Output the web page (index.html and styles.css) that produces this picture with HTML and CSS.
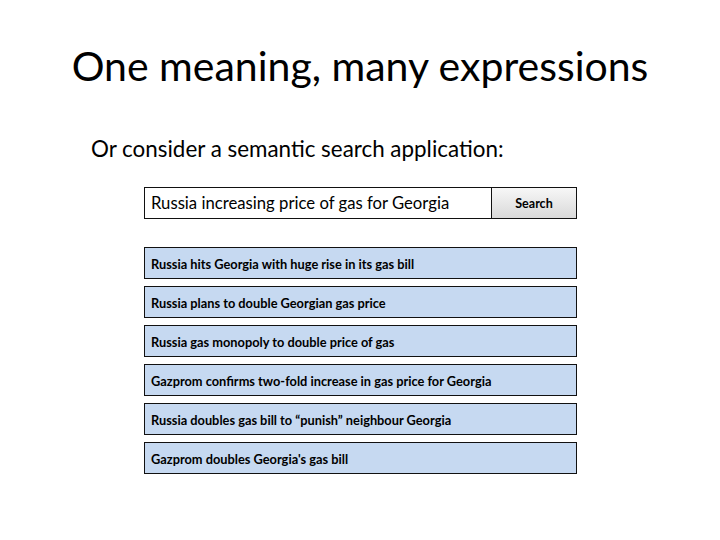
FILE: index.html
```html
<!DOCTYPE html>
<html>
<head>
<meta charset="utf-8">
<link rel="stylesheet" href="styles.css">
</head>
<body>
<div class="slide">
  <h1 class="title">One meaning, many expressions</h1>
  <p class="subtitle">Or consider a semantic search application:</p>
  <div class="search">
    <div class="query">Russia increasing price of gas for Georgia</div>
    <div class="btn">Search</div>
  </div>
  <div class="results">
    <div class="result">Russia hits Georgia with huge rise in its gas bill</div>
    <div class="result">Russia plans to double Georgian gas price</div>
    <div class="result">Russia gas monopoly to double price of gas</div>
    <div class="result">Gazprom confirms two-fold increase in gas price for Georgia</div>
    <div class="result">Russia doubles gas bill to “punish” neighbour Georgia</div>
    <div class="result">Gazprom doubles Georgia's gas bill</div>
  </div>
</div>
</body>
</html>
```
FILE: styles.css
```css
html, body {
  margin: 0;
  padding: 0;
  background: #ffffff;
}
.slide {
  width: 720px;
  height: 540px;
  font-family: Lato, "Open Sans", sans-serif;
  color: #000;
}
.title {
  margin: 0;
  padding-top: 38px;
  font-size: 41px;
  font-weight: normal;
  line-height: 56px;
  text-align: center;
}
.subtitle {
  margin: 0;
  margin-top: 40px;
  margin-left: 91px;
  font-size: 22.4px;
  line-height: 30px;
}
.search {
  margin-top: 23px;
  margin-left: 144px;
  width: 433px;
  height: 32px;
  display: flex;
}
.query {
  flex: 1;
  box-sizing: border-box;
  border: 1.5px solid #111;
  padding-left: 6px;
  font-size: 16.7px;
  display: flex;
  align-items: center;
}
.btn {
  width: 85px;
  box-sizing: border-box;
  border: 1.5px solid #111;
  border-left: none;
  background: linear-gradient(#f7f7f7, #d9d9d9);
  font-size: 12.5px;
  font-weight: bold;
  display: flex;
  align-items: center;
  justify-content: center;
}
.results {
  margin-top: 28px;
  margin-left: 144px;
  width: 433px;
  display: flex;
  flex-direction: column;
  gap: 7px;
}
.result {
  height: 32px;
  box-sizing: border-box;
  border: 1.5px solid #111;
  background: #c6d9f1;
  padding-left: 6px;
  padding-top: 2px;
  font-size: 12.8px;
  font-weight: bold;
  display: flex;
  align-items: center;
}
```
